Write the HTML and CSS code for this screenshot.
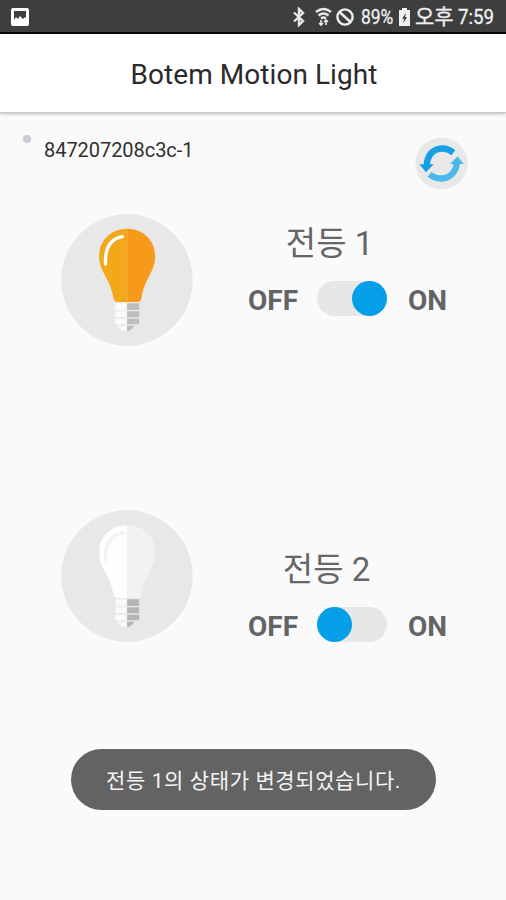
FILE: index.html
```html
<!DOCTYPE html>
<html lang="ko">
<head>
<meta charset="utf-8">
<title>Botem Motion Light</title>
<link rel="stylesheet" href="styles.css">
</head>
<body>
<div class="status">
  <svg class="s-img" width="18" height="18" viewBox="0 0 18 18"><rect width="18" height="18" rx="2" fill="#fff"/><path d="M3 3h12v7l-1-1-2 2-3-3-2 3-2-2-2 3z" fill="#3e3e3e"/></svg>
  <svg class="s-bt" width="14" height="20" viewBox="0 0 14 20"><path d="M2 5.500l9 8.500-4 4V2l4 4-9 8.500" fill="none" stroke="#e8e8e8" stroke-width="2.400"/></svg>
  <svg class="s-wifi" width="17" height="20" viewBox="0 0 17 20"><path d="M1 5q7.500-6 15 0M3.500 8.500q5-4 10 0M6 11.500q2.500-2 5 0" fill="none" stroke="#e8e8e8" stroke-width="2.400"/><path d="M6 13v5M4 16l2 2 2-2M11 18v-5M9 15l2-2 2 2" fill="none" stroke="#e8e8e8" stroke-width="1.600"/></svg>
  <svg class="s-block" width="18" height="18" viewBox="0 0 18 18"><circle cx="9" cy="9" r="7.600" fill="none" stroke="#eee" stroke-width="2.400"/><path d="M3.500 4l11 10" stroke="#eee" stroke-width="2.400"/></svg>
  <span class="pct">89%</span>
  <svg class="s-bat" width="11" height="18" viewBox="0 0 11 18"><path d="M0 2h3V0h5v2h3v16H0z" fill="#f0f0f0"/><path d="M7 5L3 10.500h2L4.300 15 8 9H6z" fill="#3e3e3e"/></svg>
  <span class="ampm">오후</span>
  <span class="clock">7:59</span>
</div>
<header class="bar"><h1>Botem Motion Light</h1></header>
<main>
  <div class="device">
    <i class="dot"></i>
    <span class="serial">847207208c3c-1</span>
    <svg class="refresh" width="53" height="53" viewBox="46 34 159 159">
      <circle cx="125.500" cy="113.500" r="78" fill="#e8e8e8"/>
      <path d="M161 81Q138 63 113 71Q84 81 81 119" fill="none" stroke="#169fe3" stroke-width="19"/>
      <path d="M59 116h43l-23 24z" fill="#169fe3"/>
      <path d="M90 146Q112 164 140 156Q168 146 172 112" fill="none" stroke="#48b9e8" stroke-width="19"/>
      <path d="M151 115h41l-18-23z" fill="#48b9e8"/>
    </svg>
  </div>
  <section class="lamp first">
    <svg class="bulb" width="132" height="132" viewBox="34 27 395 396">
      <circle cx="231.500" cy="225" r="197" fill="#e8e8e8"/>
      <path d="M232 71C183 71 148 107 148 153C148 203 181 217 191 280Q193 291 203 291H232z" fill="#f3a81b"/>
      <path d="M232 71C281 71 316 107 316 153C316 203 284 217 275 280Q273 291 263 291H232z" fill="#f79a1c"/>
      <path d="M167 177C165 132 181 102 217 95" fill="none" stroke="#fff" stroke-width="10" stroke-linecap="round"/>
      <path d="M196 295h34v20h-34zM196 319h34v18h-34zM196 341h34v17h-34zM200 362h30v17q-18-3-30-17z" fill="#fafafa"/>
      <path d="M232 295h36v20h-36zM232 319h36v18h-36zM232 341h36v17h-36zM232 362h22q-9 14-22 17z" fill="#bdbdbd"/>
    </svg>
    <div class="control">
      <h2>전등 1</h2>
      <div class="row"><b class="off">OFF</b><span class="switch on"><i></i></span><b class="onl">ON</b></div>
    </div>
  </section>
  <section class="lamp second">
    <svg class="bulb" width="132" height="132" viewBox="34 27 395 396">
      <circle cx="231.500" cy="225" r="197" fill="#e8e8e8"/>
      <path d="M232 73C183 73 148 107 148 153C148 203 181 217 191 280Q193 291 203 291H232z" fill="#fefefe"/>
      <path d="M232 73C281 73 316 107 316 153C316 203 284 217 275 280Q273 291 263 291H232z" fill="#f2f2f2"/>
      <path d="M167 177C165 132 181 102 219 95" fill="none" stroke="#f3f3f3" stroke-width="10" stroke-linecap="round"/>
      <path d="M197 295h33v20h-33zM197 319h33v18h-33zM197 341h33v17h-33zM201 362h29v17q-18-3-29-17z" fill="#fafafa"/>
      <path d="M232 295h36v20h-36zM232 319h36v18h-36zM232 341h36v17h-36zM232 362h22q-9 14-22 17z" fill="#b5b5b5"/>
    </svg>
    <div class="control">
      <h2>전등 2</h2>
      <div class="row"><b class="off">OFF</b><span class="switch"><i></i></span><b class="onl">ON</b></div>
    </div>
  </section>
  <div class="toast"><span>전등 1의 상태가 변경되었습니다.</span></div>
</main>
</body>
</html>
```
FILE: styles.css
```css
* { box-sizing: border-box; }
body {
  margin: 0;
  width: 506px;
  height: 900px;
  overflow: hidden;
  background: #fafafa;
  font-family: Roboto, "Noto Sans CJK KR", sans-serif;
}
svg { display: block; flex: none; }
.status {
  display: flex;
  align-items: center;
  height: 34px;
  padding-top: 2px;
  background: #3e3e3e;
  border-bottom: 2px solid #050505;
  color: #f0f0f0;
  font-size: 21px;
  line-height: 32px;
  white-space: nowrap;
}
.status span { flex: none; transform-origin: 0 50%; }
.s-img { margin-left: 11px; }
.s-bt { margin-left: 263px; }
.s-wifi { margin-left: 9px; }
.s-block { margin-left: 4px; }
.pct { width: 34px; margin-left: 7px; transform: scaleX(.83); -webkit-text-stroke: .3px #f0f0f0; }
.s-bat { margin-left: 4px; }
.ampm { width: 38px; margin-left: 5px; -webkit-text-stroke: .3px #f0f0f0; }
.clock { width: 36px; margin-left: 5px; transform: scaleX(.89); -webkit-text-stroke: .3px #f0f0f0; }
.bar {
  display: flex;
  align-items: center;
  justify-content: center;
  height: 79px;
  background: #fff;
  border-bottom: 1px solid #c8c8c8;
  box-shadow: 0 1px 3px #00000040;
}
h1 {
  margin: 3px 0 0 2px;
  font-size: 28px;
  font-weight: 400;
  line-height: 34px;
  letter-spacing: .05px;
  color: #2a2a2a;
  white-space: nowrap;
}
.device { display: flex; align-items: flex-start; height: 101px; padding: 22px 38px 0 23px; }
.dot { width: 8px; height: 8px; border-radius: 50%; background: #cdc9dc; }
.serial { margin: 3px auto 0 13px; font-size: 20px; line-height: 24px; letter-spacing: -.05px; color: #303030; }
.refresh { margin-top: 2px; }
.lamp { display: flex; align-items: flex-start; padding-left: 61px; }
.first { height: 296px; }
.second { height: 239px; }
.control { width: 200px; margin-left: 55px; }
.first .control { padding-top: 8px; }
.second .control { padding-top: 38px; }
h2 {
  margin: 0;
  font-size: 33px;
  font-weight: 400;
  line-height: 44px;
  text-align: center;
  color: #666;
}
.first h2 { padding-right: 37px; }
.second h2 { padding-right: 43px; }
.row { display: flex; align-items: center; height: 36px; margin-top: 14px; color: #646464; font-size: 28px; line-height: 36px; }
.off { width: 69px; padding-top: 5px; }
.onl { margin-left: 21px; padding-top: 5px; }
.switch { display: flex; width: 70px; height: 35px; border-radius: 18px; background: #e7e7e7; }
.switch i { width: 35px; height: 35px; border-radius: 50%; background: #059fe8; }
.switch.on { justify-content: flex-end; }
.toast {
  display: flex;
  align-items: center;
  justify-content: center;
  width: 365px;
  height: 61px;
  margin-left: 71px;
  padding-top: 2px;
  border-radius: 31px;
  background: #636363;
  color: #f4f4f4;
  font-size: 21px;
  line-height: 30px;
  letter-spacing: .6px;
  white-space: nowrap;
}
```
